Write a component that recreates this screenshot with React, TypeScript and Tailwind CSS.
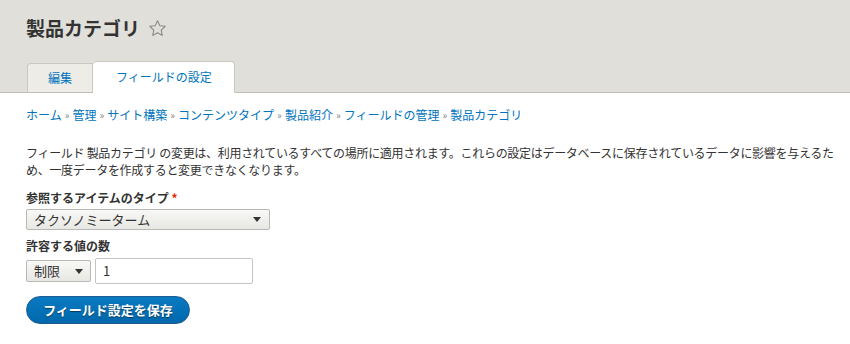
import React from 'react';

const crumbs = ['ホーム', '管理', 'サイト構築', 'コンテンツタイプ', '製品紹介', 'フィールドの管理', '製品カテゴリ'];

function Arrow() {
  return (
    <svg width="8" height="5" viewBox="0 0 8 5" className="shrink-0">
      <path d="M0 0 L8 0 L4 5 Z" fill="#333" />
    </svg>
  );
}

export default function App() {
  return (
    <div className="w-[850px] h-[344px] bg-white text-[#333] font-['Noto_Sans_CJK_JP','Noto_Sans',sans-serif]">
      {/* Header */}
      <div className="bg-[#e0dfd9] border-b border-[#bfbdb5] pt-[17px] px-[26px]">
        <div className="flex items-center gap-[8px] h-[22px]">
          <h1 className="text-[19px] leading-[22px] font-bold text-[#333]">製品カテゴリ</h1>
          <svg width="19" height="19" viewBox="0 0 24 24" className="mt-[1px]">
            <path
              d="M12 2.2l2.9 6.2 6.8.8-5 4.7 1.3 6.8L12 17.3l-6 3.4 1.3-6.8-5-4.7 6.8-.8z"
              fill="none"
              stroke="#85847e"
              strokeWidth="1.3"
              strokeLinejoin="round"
            />
          </svg>
        </div>
        {/* Tabs */}
        <div className="flex items-end mt-[22px] -mb-px pl-px">
          <div className="h-[30px] px-[20px] flex items-center bg-[#edece7] border border-[#c9c8c1] border-b-[#bfbdb5] rounded-tl-[4px] text-[12px] text-[#0074bd]">
            編集
          </div>
          <div className="h-[32px] pl-[23px] pr-[22px] flex items-center bg-white border border-[#c9c8c1] border-b-white border-l-0 rounded-t-[4px] text-[12px] text-[#0074bd]">
            フィールドの設定
          </div>
        </div>
      </div>

      {/* Content */}
      <div className="px-[26px]">
        <nav className="mt-[13px] flex items-center text-[12px] leading-[18px]">
          {crumbs.map((c, i) => (
            <React.Fragment key={c}>
              {i > 0 && <span className="text-[#888] text-[10px] px-[3px]">»</span>}
              <span className="text-[#0074bd]">{c}</span>
            </React.Fragment>
          ))}
        </nav>

        <p className="mt-[20px] -mr-[16px] text-[12px] leading-[17px] tracking-[-0.3px] text-[#333]">
          フィールド 製品カテゴリ の変更は、利用されているすべての場所に適用されます。これらの設定はデータベースに保存されているデータに影響を与えるため、一度データを作成すると変更できなくなります。
        </p>

        <div className="mt-[12px] text-[12px] leading-[16px] font-bold">
          参照するアイテムのタイプ <span className="text-[#e32700]">*</span>
        </div>
        <div className="mt-[3px] w-[244px] h-[21px] flex items-center justify-between pl-[7px] pr-[8px] border border-[#b8b8b4] rounded-[2px] bg-gradient-to-b from-[#f8f8f6] to-[#e7e7e3] text-[13px]">
          <span>タクソノミーターム</span>
          <Arrow />
        </div>

        <div className="mt-[8px] text-[12px] leading-[16px] font-bold">許容する値の数</div>
        <div className="mt-[4px] flex items-center gap-[4px]">
          <div className="w-[65px] h-[22px] flex items-center justify-between pl-[7px] pr-[7px] border border-[#b8b8b4] rounded-[2px] bg-gradient-to-b from-[#f8f8f6] to-[#e7e7e3] text-[13px]">
            <span>制限</span>
            <Arrow />
          </div>
          <div className="w-[158px] h-[26px] flex items-center px-[7px] border border-[#c5c5c0] rounded-[2px] bg-white text-[13px]">
            1
          </div>
        </div>

        <button className="mt-[12px] w-[164px] h-[28px] rounded-full bg-gradient-to-b from-[#0a7ac2] to-[#0068ac] border border-[#1e5c90] text-white text-[13px] font-bold [text-shadow:0_1px_1px_rgba(0,0,0,0.5)]">
          フィールド設定を保存
        </button>
      </div>
    </div>
  );
}
